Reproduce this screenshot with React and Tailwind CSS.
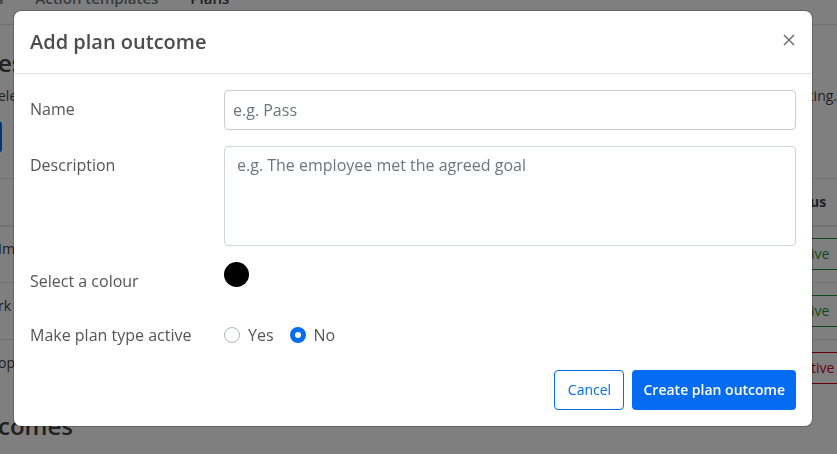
import { useState } from "react";

const planTypes = [
    { name: "Im", status: "ive", active: true },
    { name: "rk", status: "ive", active: true },
    { name: "opp", status: "tive", active: false },
];

const statusColor = {
    active: "border-[#1e9438] text-[#1e9438]",
    inactive: "border-[#d0021b] text-[#d0021b]",
};

const PlansPage = () => (
    <main className="-ml-0.5 overflow-hidden text-sm text-[#414141]">
        <nav className="flex h-[25px] items-end gap-8 border-b border-[#dee2e6] pb-4 text-[15px] leading-5 font-semibold">
            <a href="#" className="-ml-0.5 text-[#6c757d]">s</a>
            <a href="#" className="text-[#6c757d]">Action templates</a>
            <a href="#">Plans</a>
        </nav>
        <h1 className="pt-[22px] text-2xl leading-8 font-semibold">es</h1>
        <div className="flex justify-between pt-[5px] leading-6">
            <p>ele</p>
            <p>ting.</p>
        </div>
        <button type="button" aria-label="Add plan type" className="mt-[13px] block h-8 w-1 rounded-r bg-[#056cf2]" />
        <table className="mt-[25px] w-full table-fixed border-t border-[#dee2e6]">
            <thead>
                <tr className="h-[47px] border-b-2 border-[#dee2e6]">
                    <th aria-label="Plan type" />
                    <th className="w-[37px] pl-[10px] text-left font-bold">us</th>
                </tr>
            </thead>
            <tbody>
                {planTypes.map((plan) => (
                    <tr key={plan.name} className="h-[57px] border-b border-[#dee2e6] last:border-b-0">
                        <td className="pb-[10px]">{plan.name}</td>
                        <td>
                            <span className={`block w-12 border py-[5px] pl-[10px] leading-5 ${plan.active ? statusColor.active : statusColor.inactive}`}>
                                {plan.status}
                            </span>
                        </td>
                    </tr>
                ))}
            </tbody>
        </table>
        <h2 className="border-b border-[#dee2e6] pt-[13px] pb-3 text-2xl leading-8 font-semibold">comes</h2>
    </main>
);

const FormRow = ({ label, htmlFor, children }) => (
    <div className="grid grid-cols-[178px_1fr] items-start gap-4">
        <label htmlFor={htmlFor} className="pt-[7px]">
            {label}
        </label>
        {children}
    </div>
);

const AddOutcomeModal = () => {
    const [name, setName] = useState("");
    const [description, setDescription] = useState("");
    const [active, setActive] = useState("no");

    const radioClass =
        "size-4 appearance-none rounded-full border border-[#adb5bd] bg-white checked:border-[5px] checked:border-[#056cf2]";

    return (
        <form
            role="dialog"
            aria-labelledby="modal-title"
            className="w-full rounded-lg border border-black/20 bg-white bg-clip-padding text-[#555]"
            onSubmit={(e) => e.preventDefault()}
        >
            <header className="flex items-start justify-between border-b border-[#dee2e6] px-4 py-4">
                <h2 id="modal-title" className="text-xl leading-[30px] font-semibold text-[#4c4c4c]">
                    Add plan outcome
                </h2>
                <button type="button" aria-label="Close" className="mt-[6px] text-[#777]">
                    <svg viewBox="0 0 14 14" className="size-[14px]" fill="none" stroke="currentColor" strokeWidth="1.7">
                        <path d="M2 2 L12 12 M12 2 L2 12" />
                    </svg>
                </button>
            </header>

            <div className="flex flex-col gap-4 px-4 pt-4">
                <FormRow label="Name" htmlFor="name">
                    <input
                        id="name"
                        type="text"
                        value={name}
                        onChange={(e) => setName(e.target.value)}
                        placeholder="e.g. Pass"
                        className="h-10 w-full rounded border border-[#ccc] px-2 placeholder:text-[#6c757d]"
                    />
                </FormRow>
                <FormRow label="Description" htmlFor="description">
                    <textarea
                        id="description"
                        value={description}
                        onChange={(e) => setDescription(e.target.value)}
                        placeholder="e.g. The employee met the agreed goal"
                        className="block h-[100px] w-full resize-none rounded border border-[#ced4da] px-3 py-[6px] placeholder:text-[#6c757d]"
                    />
                </FormRow>
                <FormRow label="Select a colour" htmlFor="colour">
                    <button id="colour" type="button" className="size-[25px] rounded-full bg-black" />
                </FormRow>
                <fieldset className="grid grid-cols-[178px_1fr] gap-4 pt-[14px]">
                    <span id="active-label">Make plan type active</span>
                    <div role="radiogroup" aria-labelledby="active-label" className="flex gap-4">
                        <label className="flex items-center gap-2">
                            <input type="radio" name="active" className={radioClass} checked={active === "yes"} onChange={() => setActive("yes")} />
                            Yes
                        </label>
                        <label className="flex items-center gap-2">
                            <input type="radio" name="active" className={radioClass} checked={active === "no"} onChange={() => setActive("no")} />
                            No
                        </label>
                    </div>
                </fieldset>
            </div>

            <footer className="flex justify-end gap-2 px-4 pt-[23px] pb-4 text-sm">
                <button type="button" className="h-10 min-w-[70px] rounded border border-[#056cf2] px-[11px] font-medium text-[#056cf2]">
                    Cancel
                </button>
                <button type="submit" className="h-10 rounded bg-[#056cf2] px-[11px] font-semibold text-white">
                    Create plan outcome
                </button>
            </footer>
        </form>
    );
};

export default function App() {
    return (
        <div className="h-screen overflow-hidden bg-white font-['Open_Sans','Noto_Sans',sans-serif]">
            <PlansPage />
            <div className="fixed inset-0 flex items-start bg-black/50 pt-[10px] pr-6 pl-[13px]">
                <AddOutcomeModal />
            </div>
        </div>
    );
}
